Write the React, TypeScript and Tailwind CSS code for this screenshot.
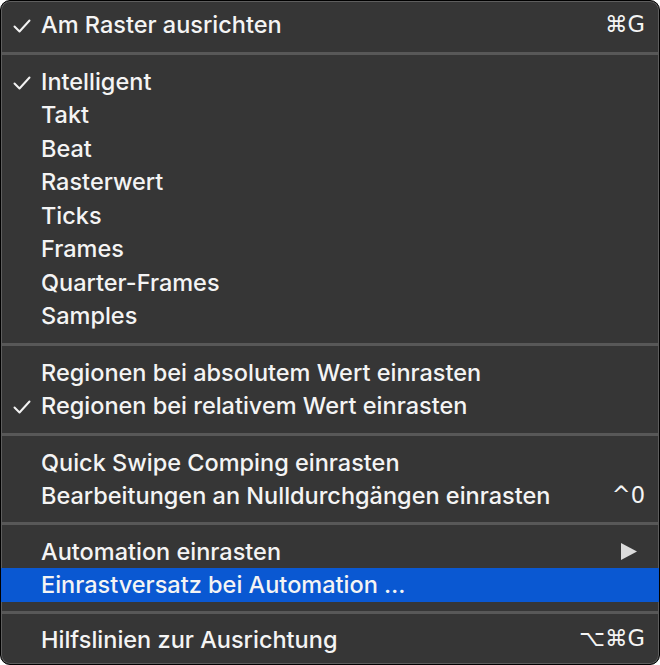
import type { ReactNode } from "react";

type Item = {
	label: string;
	checked?: boolean;
	shortcut?: ReactNode;
	submenu?: boolean;
	active?: boolean;
};

// each group is followed by a separator of the given height
const groups: { items: Item[]; sep?: number }[] = [
	{
		items: [{ label: "Am Raster ausrichten", checked: true, shortcut: "⌘G" }],
		sep: 23,
	},
	{
		items: [
			{ label: "Intelligent", checked: true },
			{ label: "Takt" },
			{ label: "Beat" },
			{ label: "Rasterwert" },
			{ label: "Ticks" },
			{ label: "Frames" },
			{ label: "Quarter-Frames" },
			{ label: "Samples" },
		],
		sep: 23,
	},
	{
		items: [
			{ label: "Regionen bei absolutem Wert einrasten" },
			{ label: "Regionen bei relativem Wert einrasten", checked: true },
		],
		sep: 23,
	},
	{
		items: [
			{ label: "Quick Swipe Comping einrasten" },
			{ label: "Bearbeitungen an Nulldurchgängen einrasten", shortcut: "^0" },
		],
		sep: 22,
	},
	{
		items: [
			{ label: "Automation einrasten", submenu: true },
			{ label: "Einrastversatz bei Automation …", active: true },
		],
		sep: 21,
	},
	{
		items: [{ label: "Hilfslinien zur Ausrichtung", shortcut: "⌥⌘G" }],
	},
];

function Check() {
	return (
		<svg width="18" height="14" viewBox="0 0 18 14" className="text-[#f2f2f2]">
			<polyline
				points="1.5,7.5 6.5,12.5 16.5,1.5"
				fill="none"
				stroke="currentColor"
				strokeWidth="2"
				strokeLinecap="round"
				strokeLinejoin="round"
			/>
		</svg>
	);
}

function SubArrow() {
	return (
		<svg width="16" height="17" viewBox="0 0 16 17" className="text-[#dcdcdc]">
			<polygon points="0,0 16,8.5 0,17" fill="currentColor" />
		</svg>
	);
}

function MenuRow({ item }: { item: Item }) {
	return (
		<div
			className={`flex h-[33.5px] items-center pr-[14px] ${
				item.active ? "bg-[#0a58d2]" : ""
			}`}
		>
			<div className="flex w-[40px] shrink-0 justify-end pr-[10px] pt-[3px]">
				{item.checked && <Check />}
			</div>
			<span className="flex-1 whitespace-nowrap">{item.label}</span>
			{item.shortcut && (
				<span className="whitespace-nowrap font-['DejaVu_Sans','Inter',sans-serif] text-[22.5px]">
					{item.shortcut}
				</span>
			)}
			{item.submenu && (
				<div className="pr-[8px]">
					<SubArrow />
				</div>
			)}
		</div>
	);
}

export default function App() {
	return (
		<div className="h-[665px] w-[660px] bg-white">
			<div className="h-full w-full overflow-hidden rounded-[10px] border border-black bg-[#363636] pt-[7px] font-['Inter',sans-serif] text-[23.5px] font-medium text-[#f4f4f4] shadow-[inset_0_0_0_1px_#5e5e5e]">
				{groups.map((g, gi) => (
					<div key={gi}>
						{g.items.map((item) => (
							<MenuRow key={item.label} item={item} />
						))}
						{g.sep && (
							<div
								className="flex items-center px-[1px]"
								style={{ height: g.sep }}
							>
								<div className="h-[3px] w-full bg-[#585858]" />
							</div>
						)}
					</div>
				))}
			</div>
		</div>
	);
}
